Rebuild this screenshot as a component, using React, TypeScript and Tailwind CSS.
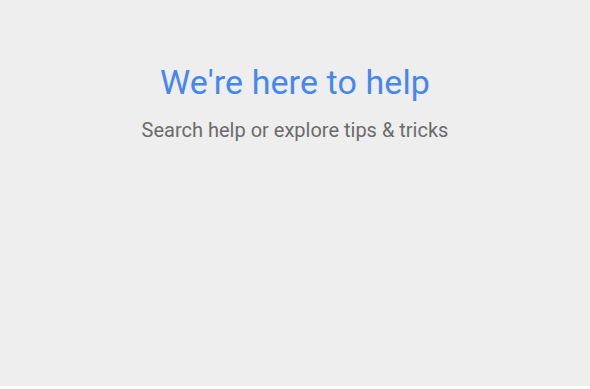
const App = () => {
  return (
    <main className="flex h-[389px] w-full flex-col bg-white font-['Roboto',sans-serif]">
      <section className="flex h-[386px] flex-col items-center bg-[#eeeeee] pt-[60px]">
        <h1 className="text-[34px] leading-[44px] font-normal tracking-[0.1px] text-[#4587ee]">
          We're here to help
        </h1>
        <p className="mt-[13px] text-[20px] leading-[26px] text-[#6b6b6b]">
          Search help or explore tips &amp; tricks
        </p>
      </section>
    </main>
  )
}

export default App
